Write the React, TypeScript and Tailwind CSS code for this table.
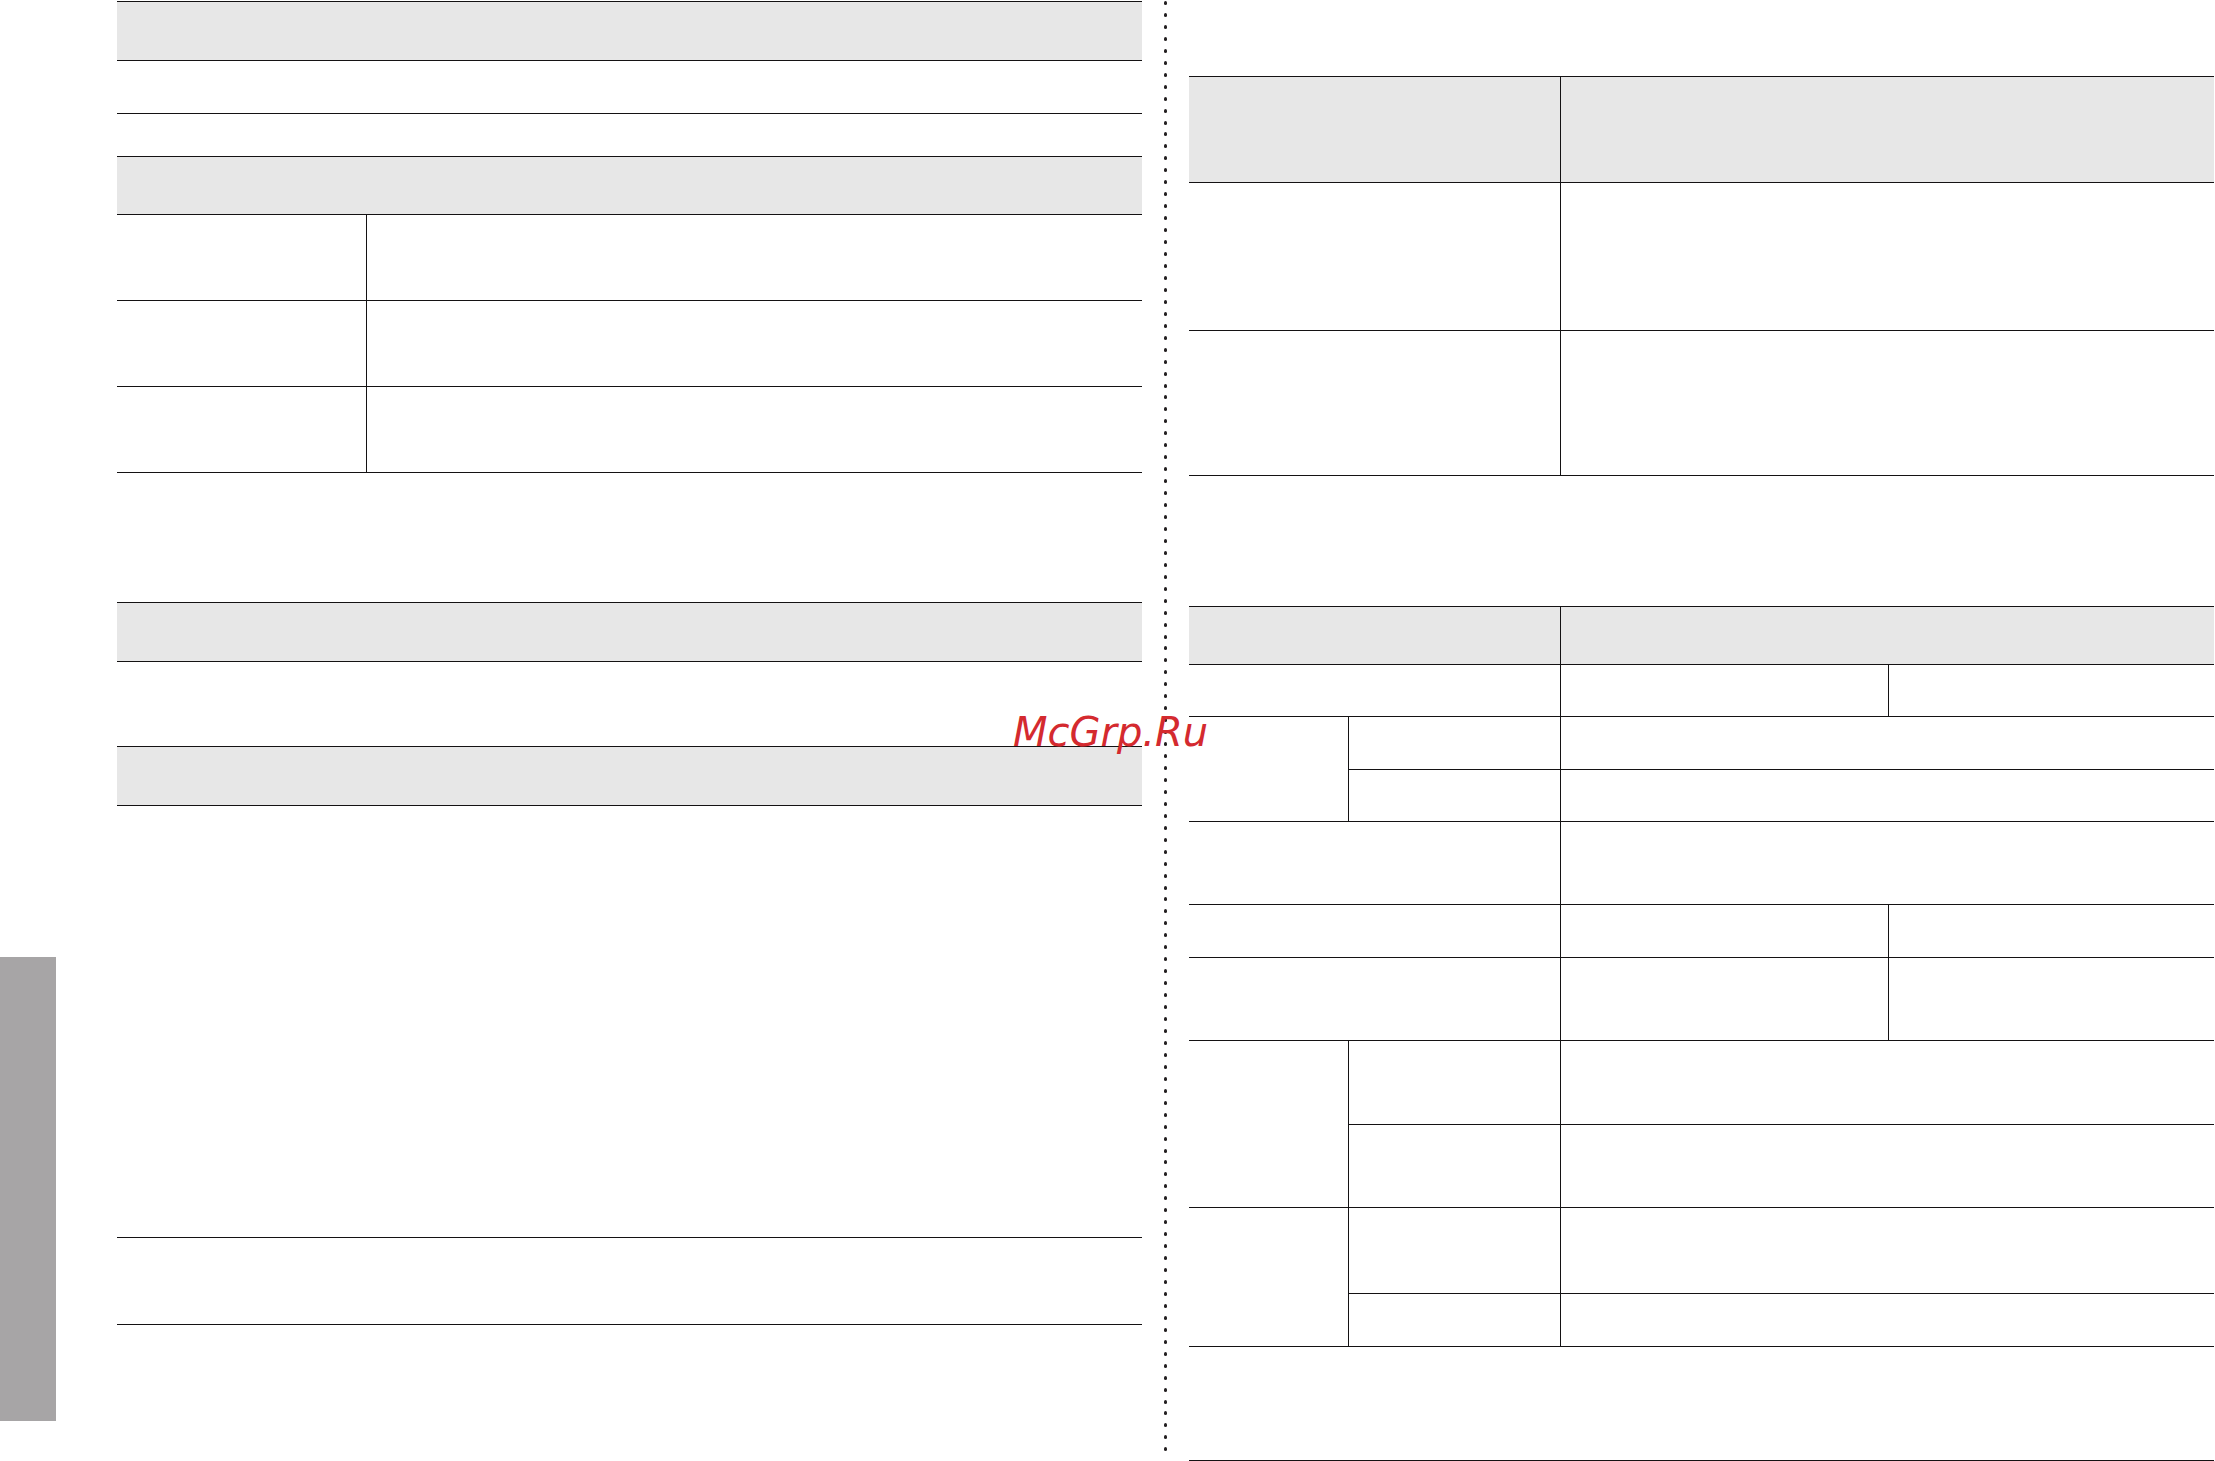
const line = "border-[#141213]";
const gray = "bg-[#e7e7e7]";

const dots = Array.from({ length: 122 }, (_, i) => i);

// left-hand three-row block with a narrow label column
const LabelRow = ({ h }: { h: string }) => (
  <div className={`flex border-b ${line} ${h}`}>
    <div className={`w-[250px] border-r ${line}`} />
    <div className="flex-1" />
  </div>
);

const TwoCol = ({ h, head }: { h: string; head?: boolean }) => (
  <div className={`flex border-b ${line} ${h} ${head ? `${gray} border-t` : ""}`}>
    <div className={`w-[372px] border-r ${line}`} />
    <div className="flex-1" />
  </div>
);

const ThreeCol = ({ h }: { h: string }) => (
  <div className={`flex border-b ${line} ${h}`}>
    <div className={`w-[372px] border-r ${line}`} />
    <div className={`w-[328px] border-r ${line}`} />
    <div className="flex-1" />
  </div>
);

const Group = ({ top, bottom }: { top: string; bottom: string }) => (
  <div className={`flex border-b ${line}`}>
    <div className={`w-[160px] border-r ${line}`} />
    <div className="flex flex-1 flex-col">
      <div className={`flex border-b ${line} ${top}`}>
        <div className={`w-[212px] border-r ${line}`} />
        <div className="flex-1" />
      </div>
      <div className={`flex ${bottom}`}>
        <div className={`w-[212px] border-r ${line}`} />
        <div className="flex-1" />
      </div>
    </div>
  </div>
);

export default function App() {
  return (
    <div className="relative flex h-[1461px] w-[2215px] overflow-hidden bg-white">
      {/* side tab */}
      <div className="w-[117px] shrink-0 pt-[957px]">
        <div className="h-[464px] w-[56px] bg-[#a7a5a6]" />
      </div>

      {/* left page */}
      <div className="flex w-[1025px] shrink-0 flex-col pt-[1px]">
        <div className={`h-[60px] border-y ${line} ${gray}`} />
        <div className={`h-[53px] border-b ${line}`} />
        <div className="h-[42px]" />
        <div className={`h-[59px] border-y ${line} ${gray}`} />
        <LabelRow h="h-[86px]" />
        <LabelRow h="h-[86px]" />
        <LabelRow h="h-[86px]" />
        <div className="h-[129px]" />
        <div className={`h-[60px] border-y ${line} ${gray}`} />
        <div className={`h-[85px] border-b ${line}`} />
        <div className={`h-[59px] border-b ${line} ${gray}`} />
        <div className={`h-[432px] border-b ${line}`} />
        <div className={`h-[87px] border-b ${line}`} />
      </div>

      {/* fold */}
      <div className="flex w-[47px] shrink-0 flex-col items-center gap-[7.96px] pt-[1px]">
        {dots.map((i) => (
          <div key={i} className="h-[4px] w-[3px] shrink-0 rounded-full bg-[#231f20]" />
        ))}
      </div>

      {/* right page */}
      <div className="flex w-[1025px] shrink-0 flex-col pt-[76px]">
        <TwoCol h="h-[107px]" head />
        <TwoCol h="h-[148px]" />
        <TwoCol h="h-[145px]" />
        <div className="h-[130px]" />
        <TwoCol h="h-[59px]" head />
        <ThreeCol h="h-[52px]" />
        <Group top="h-[53px]" bottom="h-[51px]" />
        <TwoCol h="h-[83px]" />
        <ThreeCol h="h-[53px]" />
        <ThreeCol h="h-[83px]" />
        <Group top="h-[84px]" bottom="h-[82px]" />
        <Group top="h-[86px]" bottom="h-[52px]" />
        <div className={`h-[114px] border-b ${line}`} />
      </div>

      {/* watermark */}
      <div className="absolute left-[1013px] top-[712px] font-['DejaVu_Sans',sans-serif] text-[40px] italic leading-none text-[#d42a2f]">
        McGrp.Ru
      </div>
    </div>
  );
}
